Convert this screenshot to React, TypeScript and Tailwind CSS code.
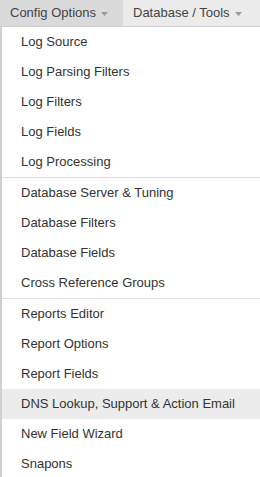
import { Fragment } from 'react';

const GROUPS: string[][] = [
  ['Log Source', 'Log Parsing Filters', 'Log Filters', 'Log Fields', 'Log Processing'],
  ['Database Server & Tuning', 'Database Filters', 'Database Fields', 'Cross Reference Groups'],
  ['Reports Editor', 'Report Options', 'Report Fields', 'DNS Lookup, Support & Action Email', 'New Field Wizard', 'Snapons'],
];

const ACTIVE_ITEM = 'DNS Lookup, Support & Action Email';

function Caret() {
  return (
    <svg width="7" height="4" viewBox="0 0 7 4" className="ml-[5px] mt-[1px]">
      <path d="M0 0 L7 0 L3.5 4 Z" fill="#9a9a9a" />
    </svg>
  );
}

export default function App() {
  return (
    <div className="w-[260px] h-[477px] overflow-hidden bg-white text-[13px]" style={{ fontFamily: '"Liberation Sans", Arial, sans-serif' }}>
      {/* Top menu bar */}
      <div className="flex h-[27px] bg-[#ebebeb] border-b border-[#cfcfcf] text-[#444]">
        <div className="flex items-center w-[123px] pl-[10px] bg-[#dadada]">
          Config Options
          <Caret />
        </div>
        <div className="flex items-center pl-[10px]">
          Database / Tools
          <Caret />
        </div>
      </div>

      {/* Dropdown */}
      <div className="border-l-2 border-[#cfcfcf] text-[#333]">
        {GROUPS.map((group, gi) => (
          <Fragment key={gi}>
            {gi > 0 && <div className="h-px bg-[#e0e0e0]" />}
            {group.map((item) => (
              <div
                key={item}
                className={`flex items-center h-[30px] pl-[19px] ${item === ACTIVE_ITEM ? 'bg-[#ececec]' : ''}`}
              >
                {item}
              </div>
            ))}
          </Fragment>
        ))}
      </div>
    </div>
  );
}
